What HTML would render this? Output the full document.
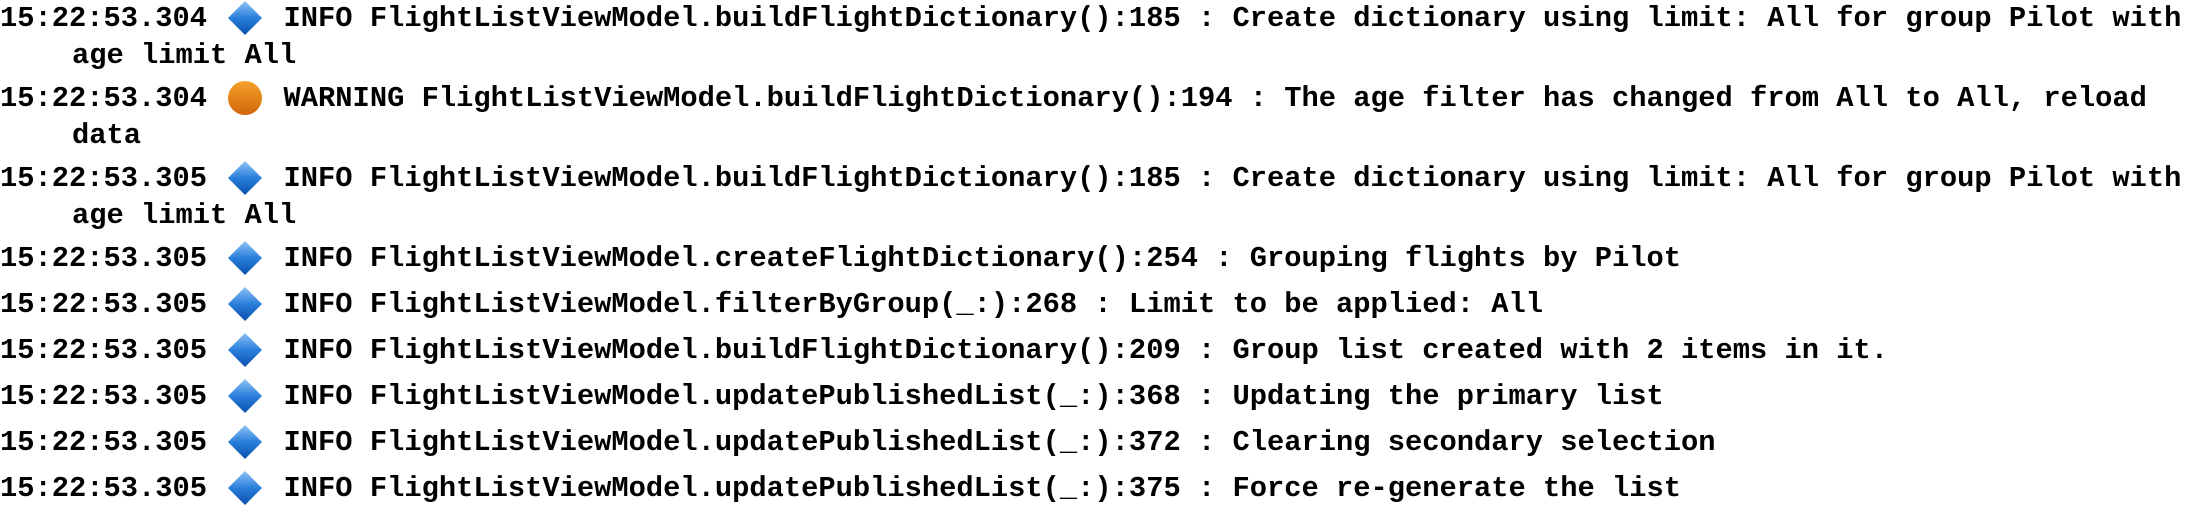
<!DOCTYPE html>
<html><head><meta charset="utf-8"><style>
html,body{margin:0;padding:0;background:#fff;width:2206px;height:520px;overflow:hidden}
body{font-family:"Liberation Mono","DejaVu Sans Mono",monospace;font-weight:bold;font-size:28.75px;color:#000;padding-top:2px;box-sizing:border-box}
.e{white-space:pre;line-height:34px;margin:0 0 12px 0;}
.w{white-space:pre;line-height:34px;padding-left:72px;position:relative;top:3px}
.ic{display:inline-block;width:42px;height:34px;vertical-align:top;position:relative}
.ic svg{position:absolute;left:3px;top:-1px}
</style></head><body>
<svg width="0" height="0" style="position:absolute"><defs>
<linearGradient id="b" x1="0" y1="0" x2="0" y2="1"><stop offset="0" stop-color="#8fc3f5"/><stop offset="0.5" stop-color="#2a7fdc"/><stop offset="1" stop-color="#0a4fae"/></linearGradient>
<linearGradient id="o" x1="0" y1="0" x2="0" y2="1"><stop offset="0" stop-color="#f6a12a"/><stop offset="1" stop-color="#d0670a"/></linearGradient>
</defs></svg>
<div class="e">15:22:53.304 <span class="ic"><svg width="36" height="34"><polygon points="18,0 35,17 18,34 1,17" fill="url(#b)"/></svg></span> INFO FlightListViewModel.buildFlightDictionary():185 : Create dictionary using limit: All for group Pilot with<div class="w">age limit All</div></div>
<div class="e">15:22:53.304 <span class="ic"><svg width="36" height="34"><circle cx="18" cy="17" r="17" fill="url(#o)"/></svg></span> WARNING FlightListViewModel.buildFlightDictionary():194 : The age filter has changed from All to All, reload<div class="w">data</div></div>
<div class="e">15:22:53.305 <span class="ic"><svg width="36" height="34"><polygon points="18,0 35,17 18,34 1,17" fill="url(#b)"/></svg></span> INFO FlightListViewModel.buildFlightDictionary():185 : Create dictionary using limit: All for group Pilot with<div class="w">age limit All</div></div>
<div class="e">15:22:53.305 <span class="ic"><svg width="36" height="34"><polygon points="18,0 35,17 18,34 1,17" fill="url(#b)"/></svg></span> INFO FlightListViewModel.createFlightDictionary():254 : Grouping flights by Pilot</div>
<div class="e">15:22:53.305 <span class="ic"><svg width="36" height="34"><polygon points="18,0 35,17 18,34 1,17" fill="url(#b)"/></svg></span> INFO FlightListViewModel.filterByGroup(_:):268 : Limit to be applied: All</div>
<div class="e">15:22:53.305 <span class="ic"><svg width="36" height="34"><polygon points="18,0 35,17 18,34 1,17" fill="url(#b)"/></svg></span> INFO FlightListViewModel.buildFlightDictionary():209 : Group list created with 2 items in it.</div>
<div class="e">15:22:53.305 <span class="ic"><svg width="36" height="34"><polygon points="18,0 35,17 18,34 1,17" fill="url(#b)"/></svg></span> INFO FlightListViewModel.updatePublishedList(_:):368 : Updating the primary list</div>
<div class="e">15:22:53.305 <span class="ic"><svg width="36" height="34"><polygon points="18,0 35,17 18,34 1,17" fill="url(#b)"/></svg></span> INFO FlightListViewModel.updatePublishedList(_:):372 : Clearing secondary selection</div>
<div class="e">15:22:53.305 <span class="ic"><svg width="36" height="34"><polygon points="18,0 35,17 18,34 1,17" fill="url(#b)"/></svg></span> INFO FlightListViewModel.updatePublishedList(_:):375 : Force re-generate the list</div>
</body></html>
